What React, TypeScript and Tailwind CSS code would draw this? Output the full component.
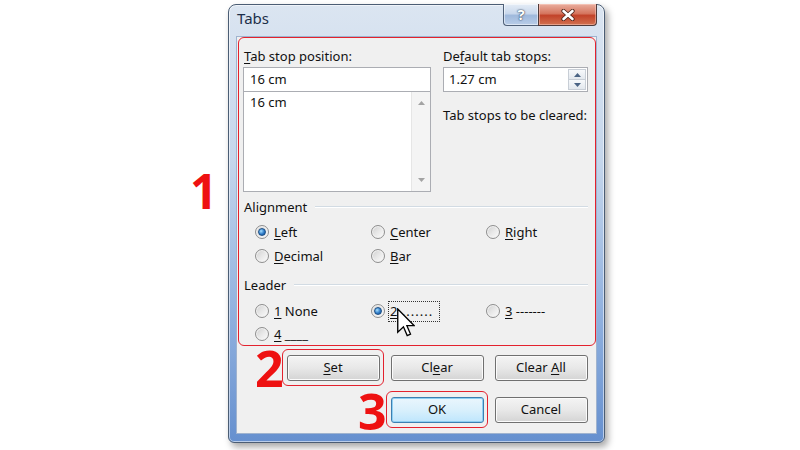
import React from "react";

function U({ c }: { c: string }) {
  return <span className="underline underline-offset-[2px] decoration-[1px]">{c}</span>;
}

function Radio({ checked = false }: { checked?: boolean }) {
  return (
    <span className="w-[14px] h-[14px] rounded-full border border-[#8e8e8e] bg-gradient-to-br from-[#cfcfcf] via-[#e8e8e8] to-[#fcfcfc] flex items-center justify-center shrink-0 shadow-[inset_0_0_0_1px_#f3f3f3]">
      {checked && (
        <span className="w-[8px] h-[8px] rounded-full border border-[#1d4f86] bg-[radial-gradient(circle_at_35%_35%,#a6e0ff,#2f7bc8_55%,#10508f)]" />
      )}
    </span>
  );
}

function Opt({ checked, children }: { checked?: boolean; children: React.ReactNode }) {
  return (
    <div className="flex items-center gap-[5px] h-full">
      <Radio checked={checked} />
      <span className="leading-none whitespace-pre">{children}</span>
    </div>
  );
}

function GroupHeader({ label }: { label: string }) {
  return (
    <div className="flex items-center h-[18px] pl-[1px] pr-[7px]">
      <span className="leading-none">{label}</span>
      <div className="flex-1 ml-[8px] h-[2px] border-t border-[#d2dbe3] border-b border-b-white" />
    </div>
  );
}

function Btn({ children, def = false }: { children: React.ReactNode; def?: boolean }) {
  return (
    <div
      className={
        "w-[93px] h-[26px] rounded-[3px] border flex items-center justify-center leading-none " +
        (def
          ? "border-[#3c7fb1] bg-gradient-to-b from-[#eaf6fd] via-[#d9f0fc] to-[#bee6fd] shadow-[inset_0_0_0_1px_#8fd0f3]"
          : "border-[#707070] bg-gradient-to-b from-[#f4f4f4] via-[#e8e8e8] to-[#d4d4d4] shadow-[inset_0_0_0_1px_#fbfbfb]")
      }
    >
      <span className="whitespace-pre">{children}</span>
    </div>
  );
}

function Wrap({ red = false, children }: { red?: boolean; children: React.ReactNode }) {
  return (
    <div
      className={
        "w-[102px] h-[37px] rounded-[6px] border-[1.5px] flex items-center justify-center " +
        (red ? "border-[#e3222e]" : "border-transparent")
      }
    >
      {children}
    </div>
  );
}

function UpArrow({ color }: { color: string }) {
  return (
    <svg width="7" height="4" viewBox="0 0 7 4">
      <path d="M0 4 L3.5 0 L7 4 Z" fill={color} />
    </svg>
  );
}
function DownArrow({ color }: { color: string }) {
  return (
    <svg width="7" height="4" viewBox="0 0 7 4">
      <path d="M0 0 L7 0 L3.5 4 Z" fill={color} />
    </svg>
  );
}

export default function App() {
  return (
    <div className="w-[800px] h-[450px] bg-white relative overflow-hidden font-['Noto_Sans',sans-serif] text-[13px] text-[#111]">
      <div className="ml-[228px] mt-[4px] w-[377px] h-[439px] rounded-t-[8px] rounded-b-[6px] border border-[#4b5d74] bg-[linear-gradient(180deg,#dbe5f1_0%,#c6d7ec_35%,#92b2df_70%,#6690cf_100%)] shadow-[3px_4px_7px_rgba(0,0,0,0.35),inset_0_0_0_1px_rgba(255,255,255,0.55)] flex flex-col px-[7px] pb-[8px]">
        {/* title bar */}
        <div className="h-[31px] flex items-start shrink-0">
          <span className="pt-[6px] pl-[1px] text-[15px] text-[#1c2f4a] leading-none">Tabs</span>
          <div className="ml-auto -mt-[1px] flex">
            <div className="w-[35px] h-[22px] rounded-bl-[4px] border border-[#4f6078] border-t-0 border-r-0 bg-[linear-gradient(180deg,#e4ecf6_0%,#c9d8ec_45%,#9fb9dc_55%,#b9cde8_100%)] flex items-center justify-center shadow-[inset_0_0_0_1px_rgba(255,255,255,0.5)]">
              <span className="text-white font-bold text-[15px] leading-none [text-shadow:0_0_2px_#2c3e57,0_0_1px_#2c3e57]">?</span>
            </div>
            <div className="w-[59px] h-[22px] rounded-br-[4px] border border-[#4f3a3a] border-t-0 bg-[linear-gradient(180deg,#eaae9f_0%,#d5765f_45%,#c2432a_55%,#d2714f_100%)] flex items-center justify-center shadow-[inset_0_0_0_1px_rgba(255,220,210,0.45)]">
              <svg width="14" height="12" viewBox="0 0 14 12">
                <path d="M2.5 2 L11.5 10 M11.5 2 L2.5 10" stroke="#4a2218" strokeWidth="4.2" strokeLinecap="round" />
                <path d="M2.5 2 L11.5 10 M11.5 2 L2.5 10" stroke="#ffffff" strokeWidth="2.6" strokeLinecap="round" />
              </svg>
            </div>
          </div>
        </div>

        {/* client area */}
        <div className="flex-1 bg-[#f0f0f0] border border-[#9fb3cf] flex flex-col">
          {/* red box 1 */}
          <div className="ml-[1px] h-[309px] rounded-[6px] border-[1.5px] border-[#e3222e] pl-[4px] pt-[9px] flex flex-col">
            <div className="flex gap-[12px]">
              {/* left column */}
              <div className="w-[188px] flex flex-col">
                <div className="h-[18px] flex items-center pl-[1px] leading-none">
                  <span>
                    <U c="T" />ab stop position:
                  </span>
                </div>
                <div className="mt-[2px] h-[25px] bg-white border border-[#abadb3] flex items-center pl-[6px] leading-none">
                  16 cm
                </div>
                <div className="-mt-[1px] h-[101px] bg-white border border-[#abadb3] flex">
                  <div className="flex-1 pl-[6px] pt-[4px] leading-none">16 cm</div>
                  <div className="w-[19px] bg-[#f4f4f4] border-l border-[#e6e6e6] flex flex-col items-center justify-between py-[9px]">
                    <UpArrow color="#a3a3a3" />
                    <DownArrow color="#a3a3a3" />
                  </div>
                </div>
              </div>
              {/* right column */}
              <div className="w-[145px] flex flex-col">
                <div className="h-[18px] flex items-center leading-none">
                  <span>
                    De<U c="f" />ault tab stops:
                  </span>
                </div>
                <div className="mt-[2px] h-[25px] bg-white border border-[#abadb3] flex items-center pl-[5px] leading-none">
                  <span className="flex-1">1.27 cm</span>
                  <div className="w-[19px] h-full flex flex-col py-[1px] pr-[1px]">
                    <div className="flex-1 border border-[#c8ced6] bg-gradient-to-b from-[#f7f9fb] to-[#e3e8ee] flex items-center justify-center">
                      <UpArrow color="#4a6384" />
                    </div>
                    <div className="flex-1 border border-t-0 border-[#c8ced6] bg-gradient-to-b from-[#f7f9fb] to-[#e3e8ee] flex items-center justify-center">
                      <DownArrow color="#4a6384" />
                    </div>
                  </div>
                </div>
                <div className="mt-[14px] h-[18px] flex items-center leading-none">Tab stops to be cleared:</div>
              </div>
            </div>

            {/* Alignment */}
            <div className="mt-[6px]">
              <GroupHeader label="Alignment" />
            </div>
            <div className="mt-[4px] pl-[12px] grid grid-cols-[116px_115px_1fr] grid-rows-[24px_24px]">
              <Opt checked>
                <U c="L" />eft
              </Opt>
              <Opt>
                <U c="C" />enter
              </Opt>
              <Opt>
                <U c="R" />ight
              </Opt>
              <Opt>
                <U c="D" />ecimal
              </Opt>
              <Opt>
                <U c="B" />ar
              </Opt>
            </div>

            {/* Leader */}
            <div className="mt-[8px]">
              <GroupHeader label="Leader" />
            </div>
            <div className="mt-[5px] pl-[12px] grid grid-cols-[116px_115px_1fr] grid-rows-[24px_22px]">
              <Opt>
                <U c="1" />{" None"}
              </Opt>
              <div className="flex items-center gap-[3px] h-full">
                <Radio checked />
                <span className="leading-none border border-dotted border-[#333] px-[1px] h-[21px] w-[52px] flex items-center whitespace-pre">
                  <U c="2" />
                  <span className="tracking-[1px]">{" ......."}</span>
                </span>
              </div>
              <Opt>
                <U c="3" />{" -------"}
              </Opt>
              <Opt>
                <U c="4" />{" ____"}
              </Opt>
            </div>
          </div>

          {/* buttons */}
          <div className="mt-[3px] pl-[45px] flex gap-[2px]">
            <Wrap red>
              <Btn>
                <U c="S" />et
              </Btn>
            </Wrap>
            <Wrap>
              <Btn>
                Cl<U c="e" />ar
              </Btn>
            </Wrap>
            <Wrap>
              <Btn>
                {"Clear "}
                <U c="A" />ll
              </Btn>
            </Wrap>
          </div>
          <div className="mt-[5px] pl-[149px] flex gap-[2px]">
            <Wrap red>
              <Btn def>OK</Btn>
            </Wrap>
            <Wrap>
              <Btn>Cancel</Btn>
            </Wrap>
          </div>
        </div>
      </div>

      {/* annotations */}
      <div className="absolute left-[190px] top-[167px] text-[48px] font-bold leading-none text-[#ee1111] font-['Open_Sans',sans-serif]">
        1
      </div>
      <div className="absolute left-[255px] top-[343px] text-[50px] font-bold leading-none text-[#ee1111] font-['Open_Sans',sans-serif]">
        2
      </div>
      <div className="absolute left-[358px] top-[386px] text-[50px] font-bold leading-none text-[#ee1111] font-['Open_Sans',sans-serif]">
        3
      </div>

      {/* cursor */}
      <svg className="absolute left-[397px] top-[308px]" width="18" height="29" viewBox="0 0 12 19">
        <path
          d="M0.5 0.5 L0.5 16 L4.3 12.4 L6.8 18.2 L9 17.2 L6.6 11.6 L11.5 11.6 Z"
          fill="#fff"
          stroke="#000"
          strokeWidth="0.9"
          strokeLinejoin="miter"
        />
      </svg>
    </div>
  );
}
